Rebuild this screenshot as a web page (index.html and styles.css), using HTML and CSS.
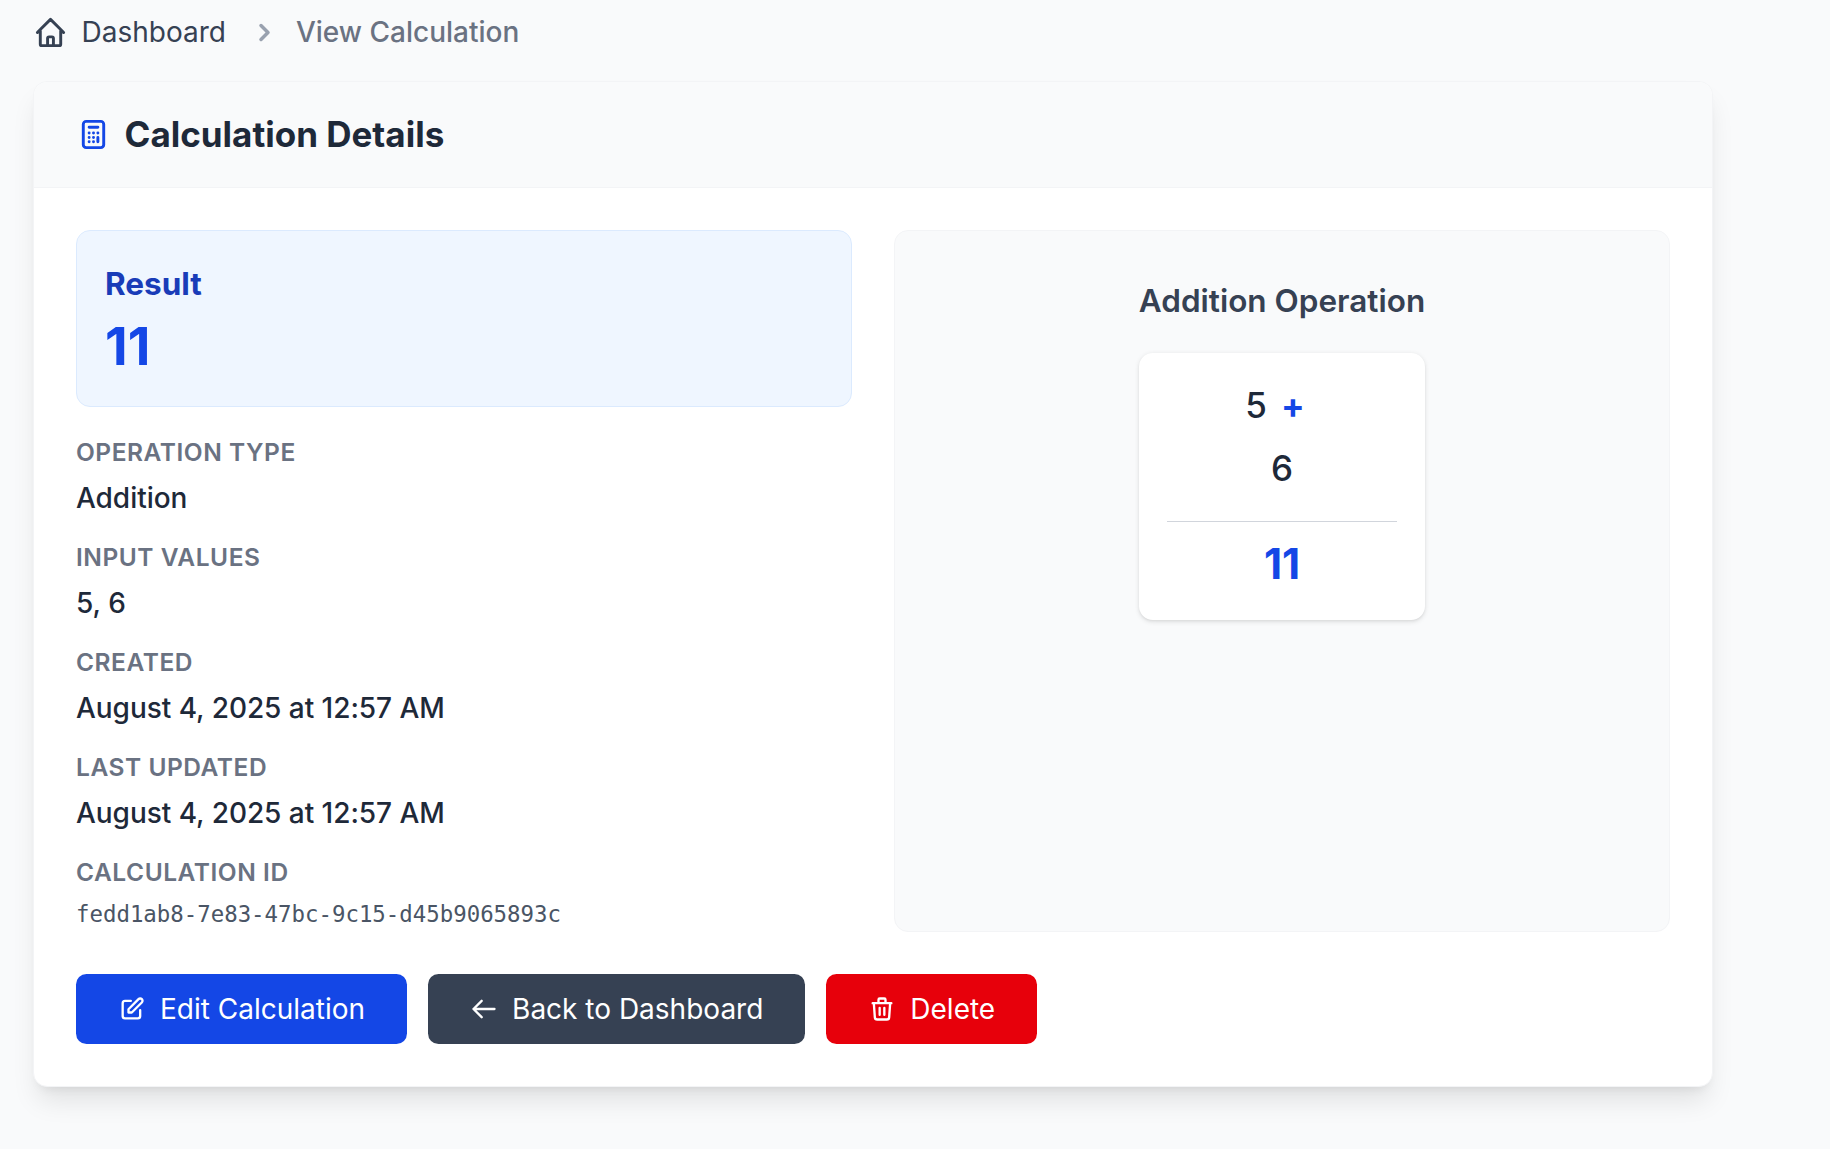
FILE: index.html
```html
<!DOCTYPE html>
<html lang="en">
<head>
<meta charset="utf-8">
<title>View Calculation</title>
<link rel="stylesheet" href="styles.css">
</head>
<body>
<main class="page">
  <nav class="breadcrumb" aria-label="Breadcrumb">
    <a class="crumb-link" href="#">
      <svg class="icon-lg" viewBox="0 0 24 24"><path d="M3 12l2-2m0 0l7-7 7 7M5 10v10a1 1 0 001 1h3m10-11l2 2m-2-2v10a1 1 0 01-1 1h-3m-6 0a1 1 0 001-1v-4a1 1 0 011-1h2a1 1 0 011 1v4a1 1 0 001 1m-6 0h6"/></svg>
      <span>Dashboard</span>
    </a>
    <div class="crumb-current">
      <svg class="icon-lg chevron" viewBox="0 0 20 20"><path d="M7.293 14.707a1 1 0 010-1.414L10.586 10 7.293 6.707a1 1 0 011.414-1.414l4 4a1 1 0 010 1.414l-4 4a1 1 0 01-1.414 0z"/></svg>
      <span>View Calculation</span>
    </div>
  </nav>

  <section class="card">
    <header class="card-header">
      <svg class="icon-lg accent" viewBox="0 0 24 24"><path d="M9 7h6m0 10v-3m-3 3h.01M9 17h.01M9 14h.01M12 14h.01M15 11h.01M12 11h.01M9 11h.01M7 21h10a2 2 0 002-2V5a2 2 0 00-2-2H7a2 2 0 00-2 2v14a2 2 0 002 2z"/></svg>
      <h1 class="card-title">Calculation Details</h1>
    </header>
    <div class="card-body">
      <div class="columns">
        <div class="details">
          <div class="result">
            <h2 class="result-label">Result</h2>
            <p class="result-value">11</p>
          </div>
          <dl class="fields">
            <div class="field"><dt>Operation Type</dt><dd>Addition</dd></div>
            <div class="field"><dt>Input Values</dt><dd>5, 6</dd></div>
            <div class="field"><dt>Created</dt><dd>August 4, 2025 at 12:57 AM</dd></div>
            <div class="field"><dt>Last Updated</dt><dd>August 4, 2025 at 12:57 AM</dd></div>
            <div class="field"><dt>Calculation ID</dt><dd class="mono">fedd1ab8-7e83-47bc-9c15-d45b9065893c</dd></div>
          </dl>
        </div>
        <div class="visual">
          <div class="operation">
            <h3 class="operation-title">Addition Operation</h3>
            <div class="sum">
              <div class="operand"><span>5</span><span class="operator">+</span></div>
              <div class="operand"><span>6</span></div>
              <div class="total">11</div>
            </div>
          </div>
        </div>
      </div>
      <div class="actions">
        <a class="button button-edit" href="#">
          <svg class="icon" viewBox="0 0 24 24"><path d="M11 5H6a2 2 0 00-2 2v11a2 2 0 002 2h11a2 2 0 002-2v-5m-1.414-9.414a2 2 0 112.828 2.828L11.828 15H9v-2.828l8.586-8.586z"/></svg>
          <span>Edit Calculation</span>
        </a>
        <a class="button button-back" href="#">
          <svg class="icon" viewBox="0 0 24 24"><path d="M10 19l-7-7m0 0l7-7m-7 7h18"/></svg>
          <span>Back to Dashboard</span>
        </a>
        <button class="button button-delete" type="button">
          <svg class="icon" viewBox="0 0 24 24"><path d="M19 7l-.867 12.142A2 2 0 0116.138 21H7.862a2 2 0 01-1.995-1.858L5 7m5 4v6m4-6v6m1-10V4a1 1 0 00-1-1h-4a1 1 0 00-1 1v3M4 7h16"/></svg>
          <span>Delete</span>
        </button>
      </div>
    </div>
  </section>
</main>
</body>
</html>
```
FILE: styles.css
```css
* { box-sizing: border-box; margin: 0; padding: 0; }

body {
  min-height: 100vh;
  background: #f9fafb;
  color: #1e2939;
  font: 400 28px/42px Inter, sans-serif;
}

a { color: inherit; text-decoration: none; }

svg {
  flex: none;
  fill: none;
  stroke: currentColor;
  stroke-width: 2;
  stroke-linecap: round;
  stroke-linejoin: round;
}
.icon { width: 28px; height: 28px; }
.icon-lg { width: 35px; height: 35px; }
.accent { color: #1447e6; }
.chevron { fill: #99a1af; stroke: none; }

.page { width: 1680px; min-height: 100vh; margin-left: 33px; padding-top: 11px; }

.breadcrumb { display: flex; gap: 21px; margin-bottom: 28px; color: #364153; }
.crumb-link, .crumb-current { display: flex; align-items: center; gap: 13.5px; }
.crumb-current { gap: 14px; color: #6a7282; font-weight: 500; }

.card {
  overflow: hidden;
  background: #fff;
  border: 1px solid #f3f4f6;
  border-radius: 14px;
  box-shadow: 0 17.5px 26.25px -5.25px rgb(0 0 0 / .1), 0 7px 10.5px -7px rgb(0 0 0 / .1);
}
.card-header {
  display: flex;
  align-items: center;
  gap: 13.5px;
  padding: 28px 42px;
  background: #f9fafb;
  border-bottom: 1px solid #f3f4f6;
}
.card-title { font-size: 35px; line-height: 49px; font-weight: 700; }
.card-body { padding: 42px; }

.columns { display: grid; grid-template-columns: 1fr 1fr; gap: 42px; }
.details { display: flex; flex-direction: column; gap: 28px; }

.result {
  padding: 27.5px 28px 28.5px;
  background: #eff6ff;
  border: 1px solid #dbeafe;
  border-radius: 14px;
}
.result-label { margin-bottom: 7px; color: #193cb8; font-size: 31.5px; line-height: 49px; font-weight: 700; }
.result-value { color: #1447e6; font-size: 52.5px; line-height: 63px; font-weight: 700; }

.fields { display: flex; flex-direction: column; gap: 21px; }
.field dt {
  margin-bottom: 7px;
  color: #6a7282;
  font-size: 24.5px;
  line-height: 35px;
  font-weight: 600;
  letter-spacing: .022em;
  text-transform: uppercase;
}
.field dd { font-weight: 500; letter-spacing: -.04px; }
.field .mono {
  color: #4a5565;
  font: 400 22.38px/35px "DejaVu Sans Mono", monospace;
  letter-spacing: 0;
}

.visual {
  display: flex;
  justify-content: center;
  align-items: flex-start;
  padding: 45px 42px;
  background: #f9fafb;
  border: 1px solid #f3f4f6;
  border-radius: 14px;
}
.operation-title { margin-bottom: 28px; color: #364153; font-size: 31.5px; line-height: 49px; font-weight: 600; }
.sum {
  padding: 28px;
  background: #fff;
  border-radius: 14px;
  box-shadow: 0 1.75px 5.25px rgb(0 0 0 / .1), 0 1.75px 3.5px -1.75px rgb(0 0 0 / .1);
  text-align: center;
}
.operand { display: flex; justify-content: center; margin-bottom: 14px; font-size: 35px; line-height: 49px; font-weight: 500; }
.operator { margin: 0 14px; color: #1447e6; font-weight: 700; }
.total {
  padding-top: 14px;
  border-top: 1px solid #d1d5dc;
  margin-top: 28px;
  color: #1447e6;
  font-size: 42px;
  line-height: 56px;
  font-weight: 700;
}

.actions { display: flex; gap: 21px; margin-top: 42px; }
.button {
  display: flex;
  align-items: center;
  gap: 14px;
  padding: 14px 42px;
  border: 0;
  border-radius: 10.5px;
  color: #fff;
  font: inherit;
}
.button-edit { background: #1447e6; }
.button-back { background: #364153; }
.button-delete { background: #e7000b; }
```
